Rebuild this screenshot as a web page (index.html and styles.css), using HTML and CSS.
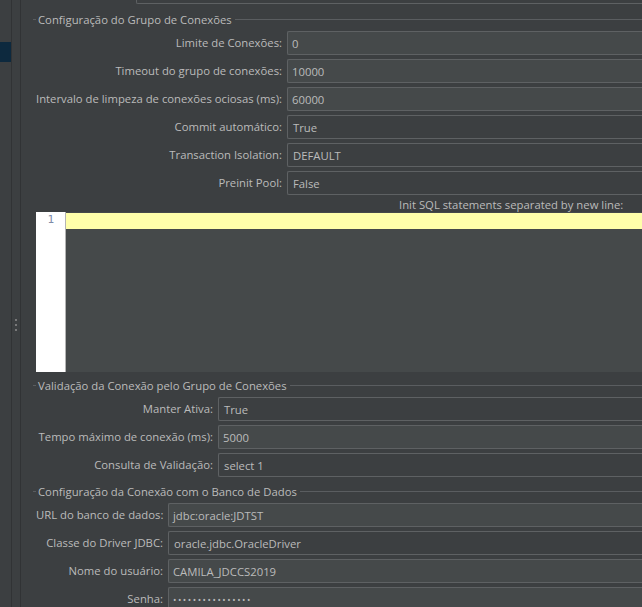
FILE: index.html
```html
<!DOCTYPE html>
<html lang="pt">
<head>
<meta charset="utf-8">
<title>JDBC Connection Configuration</title>
<link rel="stylesheet" href="styles.css">
</head>
<body>
<div class="app">
  <aside class="sidebar"><div class="tree-sel"></div></aside>
  <div class="splitter"><div class="grip"><span></span><span></span><span></span></div></div>
  <main class="panel">
    <div class="top-edge"><div class="prev-field"></div></div>

    <section class="group">
      <div class="group-head"><span class="group-title">Configuração do Grupo de Conexões</span></div>
      <div class="form form-pool">
        <label class="lbl">Limite de Conexões:</label><div class="field input">0</div>
        <label class="lbl">Timeout do grupo de conexões:</label><div class="field input">10000</div>
        <label class="lbl">Intervalo de limpeza de conexões ociosas (ms):</label><div class="field input">60000</div>
        <label class="lbl">Commit automático:</label><div class="field combo">True</div>
        <label class="lbl">Transaction Isolation:</label><div class="field combo">DEFAULT</div>
        <label class="lbl">Preinit Pool:</label><div class="field combo">False</div>
      </div>
      <div class="sql-label">Init SQL statements separated by new line:</div>
      <div class="editor">
        <div class="gutter"><div class="ln">1</div></div>
        <div class="code"><div class="line-current"></div></div>
      </div>
    </section>

    <section class="group group-validation">
      <div class="group-head"><span class="group-title">Validação da Conexão pelo Grupo de Conexões</span></div>
      <div class="form form-validation">
        <label class="lbl">Manter Ativa:</label><div class="field combo">True</div>
        <label class="lbl">Tempo máximo de conexão (ms):</label><div class="field input">5000</div>
        <label class="lbl">Consulta de Validação:</label><div class="field combo">select 1</div>
      </div>
    </section>

    <section class="group group-db">
      <div class="group-head"><span class="group-title">Configuração da Conexão com o Banco de Dados</span></div>
      <div class="form form-db">
        <label class="lbl">URL do banco de dados:</label><div class="field input">jdbc:oracle:JDTST</div>
        <label class="lbl">Classe do Driver JDBC:</label><div class="field combo">oracle.jdbc.OracleDriver</div>
        <label class="lbl">Nome do usuário:</label><div class="field input">CAMILA_JDCCS2019</div>
        <label class="lbl">Senha:</label><div class="field input"><span class="dots">••••••••••••••••</span></div>
      </div>
    </section>
  </main>
</div>
</body>
</html>
```

FILE: styles.css
```css
html, body {
  margin: 0;
  padding: 0;
  background: #3c3f41;
  width: 642px;
  height: 607px;
  overflow: hidden;
}

body {
  font-family: "Open Sans", "Noto Sans", sans-serif;
  font-size: 11.3px;
  color: #bbbbbb;
}

.app {
  display: flex;
  height: 607px;
}

.sidebar {
  width: 11px;
  flex: none;
  padding-top: 42px;
  box-sizing: border-box;
}

.tree-sel {
  height: 20px;
  background: #0d293e;
}

.splitter {
  width: 8px;
  flex: none;
  border-left: 1px solid #313335;
  border-right: 1px solid #313335;
  display: flex;
  align-items: flex-start;
  justify-content: center;
  padding-top: 319px;
}

.grip {
  display: flex;
  flex-direction: column;
  gap: 3px;
}

.grip span {
  width: 2px;
  height: 2px;
  background: #8c8c8c;
  border-radius: 1px;
}

.panel {
  flex: 1;
  min-width: 0;
  padding-left: 11px;
  overflow: hidden;
}

.top-edge {
  height: 4px;
}

.prev-field {
  margin-left: 104px;
  height: 3px;
  border-left: 1px solid #5e6163;
  border-bottom: 1px solid #5e6163;
  border-bottom-left-radius: 2px;
}

.group-head {
  display: flex;
  align-items: center;
  height: 17px;
  margin-top: 7px;
  margin-left: 1px;
}

.group-head::before {
  content: "";
  width: 3px;
  border-top: 1px solid #5a5d60;
}

.group-head::after {
  content: "";
  flex: 1;
  border-top: 1px solid #5a5d60;
  margin-left: 1px;
}

.group-title {
  padding: 0 2px;
  white-space: nowrap;
  line-height: 17px;
}

.form {
  display: grid;
  column-gap: 5px;
  row-gap: 4px;
  grid-auto-rows: 24px;
  margin-top: 3px;
  padding-left: 4px;
}

.form-pool { grid-template-columns: 246px 1fr; }
.form-validation { grid-template-columns: 177px 1fr; }
.form-db { grid-template-columns: 127px 1fr; }

.lbl {
  text-align: right;
  white-space: nowrap;
  align-self: center;
  line-height: 16px;
}

.field {
  box-sizing: border-box;
  height: 24px;
  border: 1px solid #5e6163;
  border-right: none;
  border-radius: 2px 0 0 2px;
  padding-left: 4px;
  display: flex;
  align-items: center;
  white-space: nowrap;
  overflow: hidden;
}

.input { background: #45494a; }
.combo { background: #3c3f41; padding-left: 5px; }

.dots {
  font-size: 9px;
  letter-spacing: 1.55px;
}

.sql-label {
  margin-top: 3px;
  height: 14px;
  line-height: 14px;
  padding-left: 367px;
  white-space: nowrap;
}

.editor {
  margin-left: 4px;
  height: 160px;
  display: flex;
  background: #45494a;
}

.gutter {
  width: 29px;
  flex: none;
  background: #ffffff;
  border-right: 1px solid #b4b4b4;
}

.ln {
  text-align: right;
  padding-right: 11px;
  padding-top: 1px;
  line-height: 14px;
  font-family: "DejaVu Sans Mono", "Liberation Mono", monospace;
  font-size: 11px;
  color: #7d8aa6;
}

.code {
  flex: 1;
  padding-top: 1px;
}

.line-current {
  height: 16px;
  background: #ffffaa;
}

.group-validation .group-head { margin-top: 5px; }
.group-db .group-head { margin-top: 6px; }
```
